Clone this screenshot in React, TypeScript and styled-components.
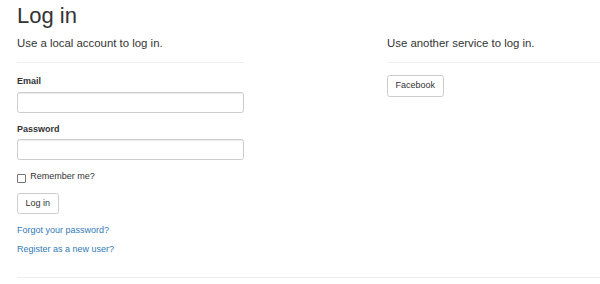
import React from 'react';
import styled, { createGlobalStyle } from 'styled-components';

const GlobalStyle = createGlobalStyle`
  html, body {
    margin: 0;
    padding: 0;
    background: #fff;
    overflow: hidden;
  }
  body {
    font-family: "Liberation Sans", Arial, Helvetica, sans-serif;
    font-size: 9px;
    line-height: 12.7px;
    color: #333;
  }
  * {
    box-sizing: border-box;
  }
`;

const Page = styled.div`
  width: 600px;
  height: 284px;
  overflow: hidden;
`;

const Container = styled.div`
  width: 740px;
  padding-left: 17px;
`;

const Title = styled.h2`
  font-size: 22px;
  line-height: 23px;
  font-weight: 400;
  margin: 3.5px 0 0;
`;

const Row = styled.div`
  display: flex;
  gap: 143px;
`;

const Column = styled.section<{ $width?: number }>`
  ${({ $width }) => ($width ? `width: ${$width}px; flex: none;` : 'flex: 1;')}
`;

const Heading = styled.h4`
  font-size: 11.4px;
  line-height: 12.5px;
  font-weight: 400;
  margin: 10.6px 0 0;
`;

const Rule = styled.hr`
  border: 0;
  border-top: 1px solid #eee;
  margin: 12.2px 0 12.7px;
`;

const Group = styled.div`
  margin-bottom: 9.5px;
`;

const Label = styled.label`
  display: block;
  font-weight: 700;
  margin-bottom: 3.5px;
`;

const Input = styled.input`
  display: block;
  width: 100%;
  height: 21.5px;
  padding: 3.8px 7.6px;
  font: inherit;
  color: #555;
  background: #fff;
  border: 1px solid #ccc;
  border-radius: 2.5px;
  box-shadow: inset 0 1px 1px rgba(0, 0, 0, 0.075);
  outline: none;
`;

const CheckRow = styled.label`
  display: flex;
  align-items: flex-start;
  gap: 4.5px;
  margin-bottom: 10px;
`;

const Check = styled.input`
  appearance: none;
  flex: none;
  width: 8.5px;
  height: 8.5px;
  margin: 4.5px 0 0 0.3px;
  border: 1px solid #767676;
  border-radius: 1px;
  background: #fff;
`;

const Button = styled.button`
  display: inline-block;
  height: 21.5px;
  padding: 0 7.6px;
  font: inherit;
  line-height: 19.5px;
  color: #333;
  background: #fff;
  border: 1px solid #ccc;
  border-radius: 2.5px;
`;

const LinkLine = styled.p`
  margin: 0 0 6.3px;

  &:last-child {
    margin-bottom: 9px;
  }
`;

const Link = styled.a`
  color: #337ab7;
  text-decoration: none;
`;

const Login: React.FC = () => {
  return (
    <Page>
      <GlobalStyle />
      <Container>
        <Title>Log in</Title>
        <Row>
          <Column $width={227}>
            <Heading>Use a local account to log in.</Heading>
            <Rule />
            <form onSubmit={(e) => e.preventDefault()}>
              <Group>
                <Label htmlFor="email">Email</Label>
                <Input id="email" type="email" />
              </Group>
              <Group>
                <Label htmlFor="password">Password</Label>
                <Input id="password" type="password" />
              </Group>
              <CheckRow>
                <Check type="checkbox" />
                Remember me?
              </CheckRow>
              <Group>
                <Button type="submit">Log in</Button>
              </Group>
              <div>
                <LinkLine>
                  <Link href="#">Forgot your password?</Link>
                </LinkLine>
                <LinkLine>
                  <Link href="#">Register as a new user?</Link>
                </LinkLine>
              </div>
            </form>
          </Column>
          <Column>
            <Heading>Use another service to log in.</Heading>
            <Rule />
            <Button type="button">Facebook</Button>
          </Column>
        </Row>
        <Rule />
      </Container>
    </Page>
  );
};

export default Login;
